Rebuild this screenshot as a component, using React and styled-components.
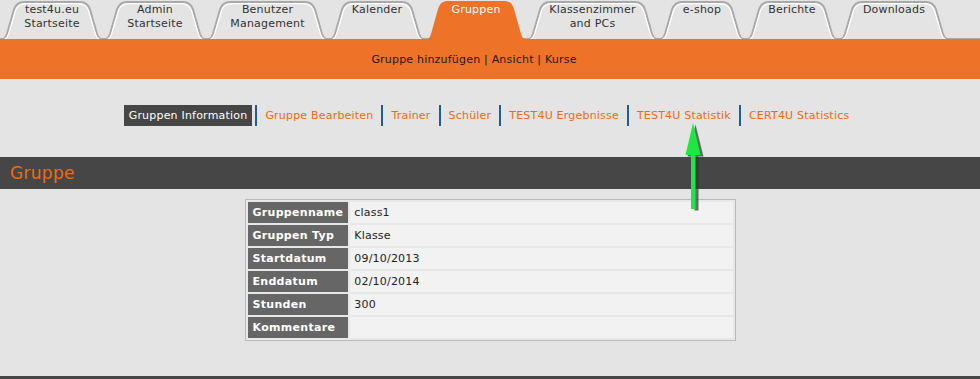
import React from "react";
import styled, { createGlobalStyle } from "styled-components";

const COLORS = {
  page: "#e4e4e4",
  orange: "#ee7227",
  link: "#f2690f",
  dark: "#464646",
  label: "#666666",
  cell: "#f2f2f2",
  tabLine: "#a9a9a9",
  sep: "#1f5c9c",
  text: "#333333",
};

const TABS = [
  { label: ["test4u.eu", "Startseite"], w: 100 },
  { label: ["Admin", "Startseite"], w: 100 },
  { label: ["Benutzer", "Management"], w: 119 },
  { label: ["Kalender"], w: 94 },
  { label: ["Gruppen"], w: 98, active: true },
  { label: ["Klassenzimmer", "and PCs"], w: 129 },
  { label: ["e-shop"], w: 84 },
  { label: ["Berichte"], w: 90 },
  { label: ["Downloads"], w: 108 },
];

const SUBNAV = [
  "Gruppen Information",
  "Gruppe Bearbeiten",
  "Trainer",
  "Schüler",
  "TEST4U Ergebnisse",
  "TEST4U Statistik",
  "CERT4U Statistics",
];

const ROWS = [
  ["Gruppenname", "class1"],
  ["Gruppen Typ", "Klasse"],
  ["Startdatum", "09/10/2013"],
  ["Enddatum", "02/10/2014"],
  ["Stunden", "300"],
  ["Kommentare", ""],
];

const GlobalStyle = createGlobalStyle`
  body {
    margin: 0;
    background: ${COLORS.page};
    font-family: "DejaVu Sans", Verdana, sans-serif;
    font-size: 11px;
  }
`;

// outline of a tab, i = inset from the outer edge
const tabPath = (w, i) =>
  `M${i},39 C${i + 2},38.5 ${i + 3},37 ${i + 4},34 L${i + 11},${9 + i / 2} ` +
  `C${i + 13},${3 + i} ${i + 16},${1 + i} ${i + 21},${1 + i} L${w - i - 21},${1 + i} ` +
  `C${w - i - 16},${1 + i} ${w - i - 13},${3 + i} ${w - i - 11},${9 + i / 2} ` +
  `L${w - i - 4},34 C${w - i - 3},37 ${w - i - 2},38.5 ${w - i},39`;

const Tab = ({ label, w, active }) => (
  <TabItem $w={w}>
    <TabShape width={w} height={39} viewBox={`0 0 ${w} 39`}>
      {active ? (
        <path d={tabPath(w, 0) + " Z"} fill={COLORS.orange} />
      ) : (
        <>
          <path d={tabPath(w, 1)} fill={COLORS.page} stroke={COLORS.tabLine} strokeWidth="2" />
          <path d={tabPath(w, 2.6)} fill="none" stroke="#ffffff" strokeWidth="1.2" />
        </>
      )}
    </TabShape>
    <TabLabel $active={active}>
      {label.map((l) => (
        <div key={l}>{l}</div>
      ))}
    </TabLabel>
  </TabItem>
);

const Arrow = () => (
  <ArrowSvg width="24" height="92" viewBox="0 0 24 92">
    <polygon points="10,3 18,35 13,35 13,89 9,89 9,35 2,35" fill="#2b3b2b" opacity="0.7" transform="translate(1.5,0.5)" />
    <polygon points="9,2 16.5,34 11.5,34 11.5,88 7,88 7,34 1.5,34" fill="#1ee840" />
  </ArrowSvg>
);

const App = () => {
  return (
    <Page>
      <GlobalStyle />
      <TabBar>
        {TABS.map((t) => (
          <Tab key={t.label.join(" ")} {...t} />
        ))}
      </TabBar>
      <SubBar>Gruppe hinzufügen | Ansicht | Kurse</SubBar>
      <Nav>
        {SUBNAV.map((item, idx) => (
          <React.Fragment key={item}>
            {idx > 0 && <Sep />}
            <NavLink $active={idx === 0}>{item}</NavLink>
          </React.Fragment>
        ))}
      </Nav>
      <SectionHeader>Gruppe</SectionHeader>
      <InfoTable>
        <tbody>
          {ROWS.map(([k, v]) => (
            <tr key={k}>
              <LabelCell>{k}</LabelCell>
              <ValueCell>{v}</ValueCell>
            </tr>
          ))}
        </tbody>
      </InfoTable>
      <Footer />
      <Arrow />
    </Page>
  );
};

const Page = styled.div`
  position: relative;
  display: flex;
  flex-direction: column;
`;

const TabBar = styled.div`
  display: flex;
  align-items: flex-end;
  gap: 3px;
  height: 39px;
  padding-left: 2px;
  background: ${COLORS.page};
  box-shadow: inset 0 -1px 0 ${COLORS.tabLine};
`;

const TabItem = styled.div`
  position: relative;
  width: ${(p) => p.$w}px;
  height: 39px;
  flex: none;
`;

const TabShape = styled.svg`
  position: absolute;
  left: 0;
  top: 0;
`;

const TabLabel = styled.div`
  position: relative;
  padding-top: 3px;
  text-align: center;
  line-height: 14px;
  font-size: 11px;
  letter-spacing: 0.2px;
  color: ${(p) => (p.$active ? "#ffffff" : COLORS.text)};
`;

const SubBar = styled.div`
  height: 40px;
  display: flex;
  align-items: center;
  justify-content: center;
  padding-right: 32px;
  background: ${COLORS.orange};
  color: #1c1c1c;
  font-size: 11px;
  letter-spacing: 0.2px;
`;

const Nav = styled.div`
  display: flex;
  justify-content: center;
  align-items: center;
  margin-top: 26px;
  height: 21px;
  padding-right: 2px;
`;

const NavLink = styled.span`
  padding: 0 5px;
  height: 21px;
  line-height: 21px;
  font-size: 11px;
  letter-spacing: 0.2px;
  white-space: nowrap;
  background: ${(p) => (p.$active ? COLORS.dark : "transparent")};
  color: ${(p) => (p.$active ? "#ffffff" : COLORS.link)};
`;

const Sep = styled.span`
  width: 2px;
  height: 21px;
  margin: 0 3px;
  background: ${COLORS.sep};
`;

const SectionHeader = styled.div`
  margin-top: 31px;
  height: 32px;
  line-height: 32px;
  padding-left: 10px;
  background: ${COLORS.dark};
  color: ${COLORS.link};
  font-size: 17px;
  letter-spacing: 0.3px;
`;

const InfoTable = styled.table`
  margin: 10px auto 35px;
  width: 491px;
  border: 1px solid #b9b9b9;
  border-spacing: 2px;
  background: #e8e8e8;
`;

const LabelCell = styled.td`
  width: 90px;
  height: 21px;
  padding: 0 5px;
  background: ${COLORS.label};
  color: #ffffff;
  font-weight: bold;
  font-size: 11px;
  letter-spacing: 0.3px;
  white-space: nowrap;
`;

const ValueCell = styled.td`
  height: 21px;
  padding: 0 4px;
  background: ${COLORS.cell};
  color: #222222;
  font-size: 11px;
  letter-spacing: 0.2px;
`;

const Footer = styled.div`
  height: 4px;
  background: ${COLORS.dark};
`;

const ArrowSvg = styled.svg`
  position: absolute;
  left: 684px;
  top: 121px;
`;

export default App;
